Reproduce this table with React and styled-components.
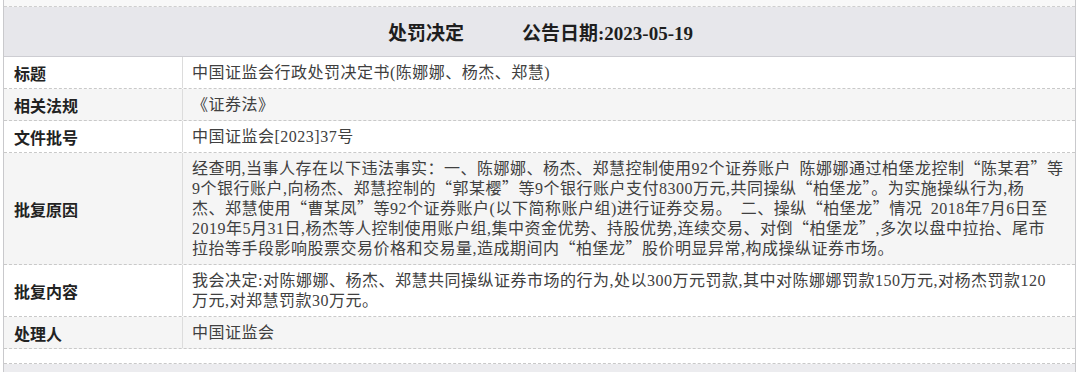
import React from "react";
import styled, { createGlobalStyle } from "styled-components";

const GlobalStyle = createGlobalStyle`
  body {
    margin: 0;
    background: #ffffff;
    font-family: "Liberation Serif", "Noto Sans CJK SC", serif;
  }
`;

const rows = [
  { label: "标题", lines: ["中国证监会行政处罚决定书(陈娜娜、杨杰、郑慧)"] },
  { label: "相关法规", lines: ["《证券法》"] },
  { label: "文件批号", lines: ["中国证监会[2023]37号"] },
  {
    label: "批复原因",
    lines: [
      "经查明,当事人存在以下违法事实：一、陈娜娜、杨杰、郑慧控制使用92个证券账户 陈娜娜通过柏堡龙控制“陈某君”等",
      "9个银行账户,向杨杰、郑慧控制的“郭某樱”等9个银行账户支付8300万元,共同操纵“柏堡龙”。为实施操纵行为,杨",
      "杰、郑慧使用“曹某凤”等92个证券账户(以下简称账户组)进行证券交易。 二、操纵“柏堡龙”情况 2018年7月6日至",
      "2019年5月31日,杨杰等人控制使用账户组,集中资金优势、持股优势,连续交易、对倒“柏堡龙”,多次以盘中拉抬、尾市",
      "拉抬等手段影响股票交易价格和交易量,造成期间内“柏堡龙”股价明显异常,构成操纵证券市场。",
    ],
  },
  {
    label: "批复内容",
    lines: [
      "我会决定:对陈娜娜、杨杰、郑慧共同操纵证券市场的行为,处以300万元罚款,其中对陈娜娜罚款150万元,对杨杰罚款120",
      "万元,对郑慧罚款30万元。",
    ],
  },
  { label: "处理人", lines: ["中国证监会"] },
];

// full-width quotes come from the CJK font, as in the original page
function renderLine(text) {
  return text.split(/([“”])/).map((part, k) =>
    part === "“" || part === "”" ? <Quote key={k}>{part}</Quote> : part
  );
}

function App() {
  return (
    <>
      <GlobalStyle />
      <Page>
        <Table>
          <TopStrip />
          <Header>
            <span>处罚决定</span>
            <span>公告日期:2023-05-19</span>
          </Header>
          {rows.map((r, i) => (
            <Row key={r.label} $alt={i % 2 === 1}>
              <Label>{r.label}</Label>
              <Value>
                {r.lines.map((l, j) => (
                  <Line key={j}>{renderLine(l)}</Line>
                ))}
              </Value>
            </Row>
          ))}
          <Spacer />
          <Footer />
        </Table>
      </Page>
    </>
  );
}

const Page = styled.div`
  padding-left: 3px;
  width: 1073px;
`;

const Table = styled.div`
  display: flex;
  flex-direction: column;
  border-left: 1px solid #c9c9cc;
  border-right: 1px solid #c9c9cc;
`;

const TopStrip = styled.div`
  height: 6px;
  background: #f8f8f8;
  border-bottom: 1px dashed #cfcfcf;
`;

const Header = styled.div`
  height: 49px;
  background: #e7e7eb;
  border-bottom: 1px solid #cdcdd2;
  display: flex;
  align-items: center;
  justify-content: center;
  gap: 58px;
  font-size: 19px;
  font-weight: bold;
  color: #1e1e1e;
  padding-left: 2px;
`;

const Row = styled.div`
  display: grid;
  grid-template-columns: 179px 1fr;
  background: ${(p) => (p.$alt ? "#f5f5f5" : "#ffffff")};
  border-bottom: 1px dashed #c9c9c9;
`;

const Label = styled.div`
  display: flex;
  align-items: center;
  padding-left: 10px;
  border-right: 1px solid #dcdcdc;
  font-size: 16px;
  font-weight: bold;
  color: #222222;
`;

const Value = styled.div`
  padding: 5.5px 9px;
  font-size: 16px;
  color: #404040;
  letter-spacing: 0.5px;
  word-spacing: 4px;
`;

const Line = styled.div`
  height: 20px;
  line-height: 20px;
  white-space: nowrap;
`;

const Quote = styled.span`
  font-family: "Noto Sans CJK SC", sans-serif;
  line-height: 1;
`;

const Spacer = styled.div`
  height: 14px;
  background: #ffffff;
  border-bottom: 1px dashed #c9c9c9;
`;

const Footer = styled.div`
  height: 10px;
  background: #ececef;
`;

export default App;
